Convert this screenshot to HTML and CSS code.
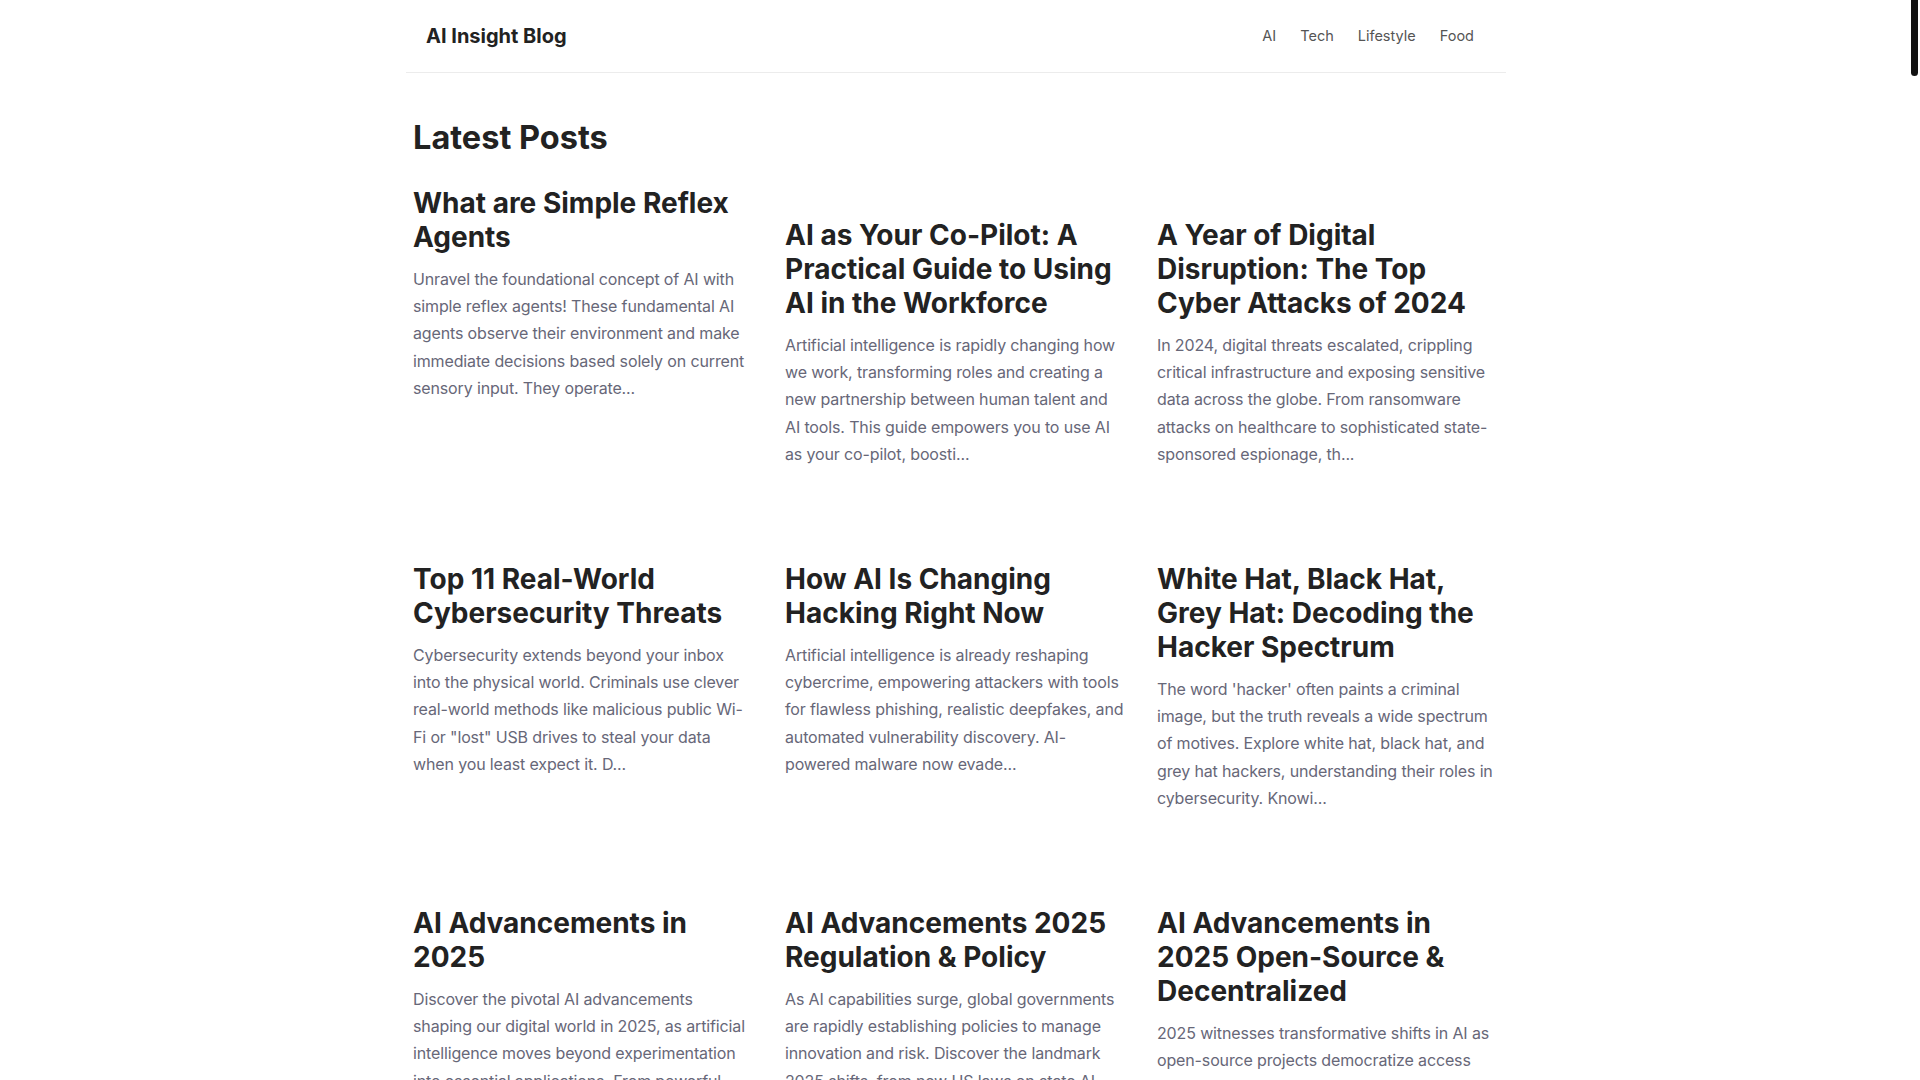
FILE: index.html
```html
<!DOCTYPE html>
<html lang="en">
<head>
<meta charset="utf-8">
<title>AI Insight Blog</title>
<link rel="stylesheet" href="styles.css">
</head>
<body>
<header class="site-header">
  <a class="logo" href="#">AI Insight Blog</a>
  <nav class="nav">
    <a href="#">AI</a>
    <a href="#">Tech</a>
    <a href="#">Lifestyle</a>
    <a href="#">Food</a>
  </nav>
</header>
<main class="main">
  <h1 class="page-title">Latest Posts</h1>
  <div class="posts">
    <article class="post">
      <h2 class="post-title">What are Simple Reflex Agents</h2>
      <p class="post-excerpt">Unravel the foundational concept of AI with simple reflex agents! These fundamental AI agents observe their environment and make immediate decisions based solely on current sensory input. They operate...</p>
    </article>
    <article class="post post--shifted">
      <h2 class="post-title">AI as Your Co-Pilot: A Practical Guide to Using AI in the Workforce</h2>
      <p class="post-excerpt">Artificial intelligence is rapidly changing how we work, transforming roles and creating a new partnership between human talent and AI tools. This guide empowers you to use AI as your co-pilot, boosti...</p>
    </article>
    <article class="post post--shifted">
      <h2 class="post-title">A Year of Digital Disruption: The Top Cyber Attacks of 2024</h2>
      <p class="post-excerpt">In 2024, digital threats escalated, crippling critical infrastructure and exposing sensitive data across the globe. From ransomware attacks on healthcare to sophisticated state-sponsored espionage, th...</p>
    </article>
    <article class="post">
      <h2 class="post-title">Top 11 Real-World Cybersecurity Threats</h2>
      <p class="post-excerpt">Cybersecurity extends beyond your inbox into the physical world. Criminals use clever real-world methods like malicious public Wi-Fi or "lost" USB drives to steal your data when you least expect it. D...</p>
    </article>
    <article class="post">
      <h2 class="post-title">How AI Is Changing Hacking Right Now</h2>
      <p class="post-excerpt">Artificial intelligence is already reshaping cybercrime, empowering attackers with tools for flawless phishing, realistic deepfakes, and automated vulnerability discovery. AI-powered malware now evade...</p>
    </article>
    <article class="post">
      <h2 class="post-title">White Hat, Black Hat, Grey Hat: Decoding the Hacker Spectrum</h2>
      <p class="post-excerpt">The word 'hacker' often paints a criminal image, but the truth reveals a wide spectrum of motives. Explore white hat, black hat, and grey hat hackers, understanding their roles in cybersecurity. Knowi...</p>
    </article>
    <article class="post">
      <h2 class="post-title">AI Advancements in 2025</h2>
      <p class="post-excerpt">Discover the pivotal AI advancements shaping our digital world in 2025, as artificial intelligence moves beyond experimentation into essential applications. From powerful...</p>
    </article>
    <article class="post">
      <h2 class="post-title">AI Advancements 2025 Regulation &amp; Policy</h2>
      <p class="post-excerpt">As AI capabilities surge, global governments are rapidly establishing policies to manage innovation and risk. Discover the landmark 2025 shifts, from new US laws on state AI...</p>
    </article>
    <article class="post">
      <h2 class="post-title">AI Advancements in 2025 Open-Source &amp; Decentralized</h2>
      <p class="post-excerpt">2025 witnesses transformative shifts in AI as open-source projects democratize access and decentralized networks reshape how models are built and shared. Discover...</p>
    </article>
  </div>
</main>
<div class="scroll-thumb" aria-hidden="true"></div>
</body>
</html>
```

FILE: styles.css
```css
html {
  background: #ffffff;
}

body {
  margin: 0;
  padding-right: 8px;
  font-family: Inter, "Noto Sans", "Liberation Sans", sans-serif;
  color: #222222;
  background: #ffffff;
}

a {
  color: inherit;
  text-decoration: none;
}

.scroll-thumb {
  position: fixed;
  top: 0;
  right: 2px;
  width: 7px;
  height: 76px;
  border-radius: 0 0 4px 4px;
  background: #111111;
}

.site-header {
  max-width: 1100px;
  height: 73px;
  margin: 0 auto;
  padding: 0 20px;
  box-sizing: border-box;
  display: flex;
  align-items: center;
  justify-content: space-between;
  border-bottom: 1px solid #ececec;
}

.logo {
  font-size: 20px;
  font-weight: 700;
  color: #222222;
}

.nav {
  display: flex;
  align-items: center;
}

.nav a {
  padding: 6px 12px 8px;
  font-size: 14.5px;
  color: #555555;
}

.main {
  max-width: 1100px;
  margin: 0 auto;
  padding: 0 7px;
  box-sizing: border-box;
}

.page-title {
  margin: 46px 0 29px;
  font-size: 32.5px;
  line-height: 38px;
  font-weight: 700;
  color: #222222;
}

.posts {
  display: grid;
  grid-template-columns: repeat(3, 1fr);
  column-gap: 30px;
  row-gap: 94px;
  align-items: start;
}

.post--shifted {
  padding-top: 32px;
}

.post-title {
  margin: 0 0 12px;
  font-size: 28px;
  line-height: 34px;
  font-weight: 700;
  color: #222222;
}

.post-excerpt {
  margin: 0;
  font-size: 16px;
  line-height: 27.2px;
  letter-spacing: -0.14px;
  color: #676778;
}
```
